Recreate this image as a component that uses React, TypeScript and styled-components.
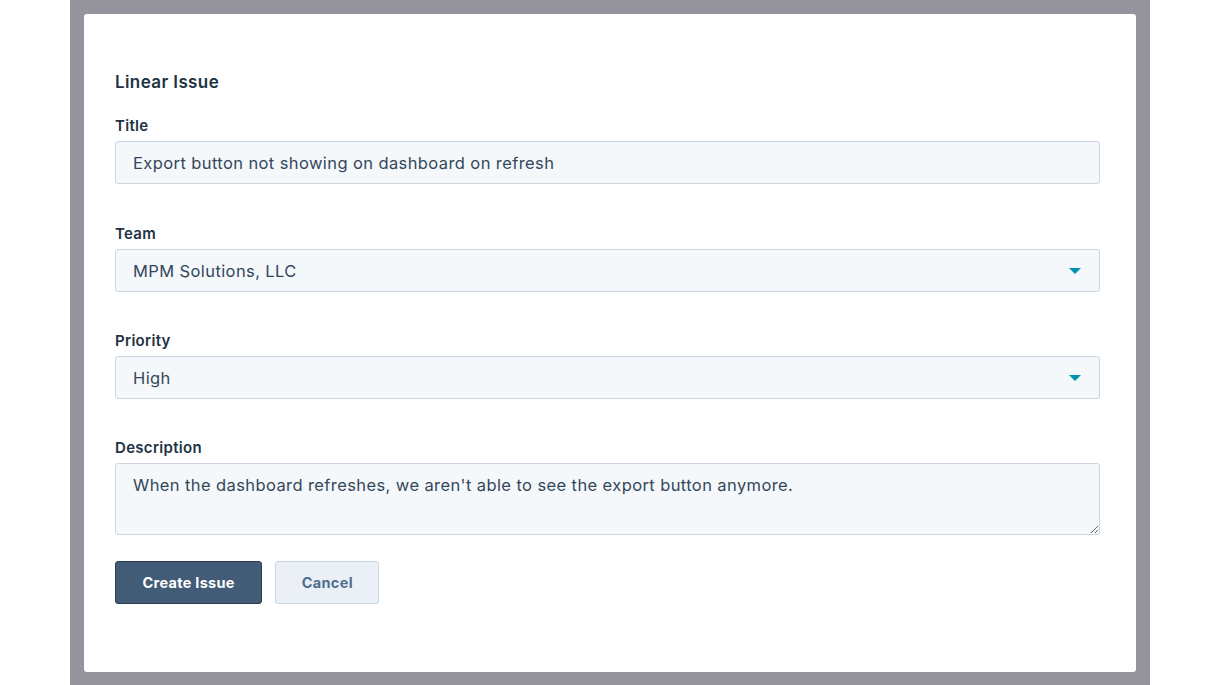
import React from "react";
import styled, { createGlobalStyle } from "styled-components";

const GlobalStyle = createGlobalStyle`
  html, body { margin: 0; padding: 0; background: #ffffff; }
  body { font-family: "Inter", "Noto Sans", "Liberation Sans", sans-serif; }
  * { box-sizing: border-box; }
`;

const Page = styled.div`
  width: 1218px;
  height: 685px;
  display: flex;
  padding-left: 70px;
  background: #ffffff;
`;

const Backdrop = styled.div`
  width: 1080px;
  height: 685px;
  background: #95949c;
  padding: 14px 14px 13px 14px;
`;

const Card = styled.div`
  height: 100%;
  background: #ffffff;
  border-radius: 3px;
  padding: 56px 36px 0 31px;
  display: flex;
  flex-direction: column;
`;

const Heading = styled.h2`
  margin: 0 0 22px 0;
  font-size: 17px;
  line-height: 24px;
  font-weight: 600;
  letter-spacing: 0.4px;
  color: #213343;
`;

const Field = styled.div<{ $gap: number }>`
  display: flex;
  flex-direction: column;
  margin-bottom: ${(p) => p.$gap}px;
`;

const Label = styled.label`
  font-size: 15px;
  line-height: 20px;
  font-weight: 600;
  letter-spacing: 0.3px;
  color: #213343;
  margin-bottom: 5px;
`;

const boxBase = `
  width: 100%;
  background: #f5f8fa;
  border: 1px solid #cbd6e2;
  border-radius: 3px;
  color: #33475b;
  font-family: "Inter", "Noto Sans", "Liberation Sans", sans-serif;
  font-size: 16.5px;
  letter-spacing: 0.4px;
`;

const TextInput = styled.div`
  ${boxBase}
  height: 43px;
  display: flex;
  align-items: center;
  padding: 0 17px;
`;

const SelectBox = styled.div`
  ${boxBase}
  height: 43px;
  display: flex;
  align-items: center;
  justify-content: space-between;
  padding: 0 18px 0 17px;
`;

const Caret = styled.span`
  width: 0;
  height: 0;
  border-left: 6px solid transparent;
  border-right: 6px solid transparent;
  border-top: 6px solid #0091ae;
`;

const TextArea = styled.textarea`
  ${boxBase}
  display: block;
  height: 72px;
  padding: 10px 17px;
  line-height: 22px;
  resize: vertical;
  outline: none;
`;

const Actions = styled.div`
  display: flex;
  gap: 13px;
`;

const Button = styled.button<{ $primary?: boolean }>`
  height: 43px;
  border-radius: 3px;
  font-family: "Inter", "Noto Sans", "Liberation Sans", sans-serif;
  font-size: 14.5px;
  font-weight: 700;
  letter-spacing: 0.3px;
  cursor: pointer;
  padding: 0 ${(p) => (p.$primary ? "26.5px" : "25.5px")};
  background: ${(p) => (p.$primary ? "#425b76" : "#eaf0f6")};
  border: 1px solid ${(p) => (p.$primary ? "#2d3e50" : "#cbd6e2")};
  color: ${(p) => (p.$primary ? "#ffffff" : "#506e91")};
`;

export default function App() {
  return (
    <>
      <GlobalStyle />
      <Page>
        <Backdrop>
          <Card>
            <Heading>Linear Issue</Heading>
            <Field $gap={40}>
              <Label>Title</Label>
              <TextInput>Export button not showing on dashboard on refresh</TextInput>
            </Field>
            <Field $gap={39}>
              <Label>Team</Label>
              <SelectBox>
                <span>MPM Solutions, LLC</span>
                <Caret />
              </SelectBox>
            </Field>
            <Field $gap={39}>
              <Label>Priority</Label>
              <SelectBox>
                <span>High</span>
                <Caret />
              </SelectBox>
            </Field>
            <Field $gap={26}>
              <Label>Description</Label>
              <TextArea
                readOnly
                defaultValue="When the dashboard refreshes, we aren't able to see the export button anymore."
              />
            </Field>
            <Actions>
              <Button $primary>Create Issue</Button>
              <Button>Cancel</Button>
            </Actions>
          </Card>
        </Backdrop>
      </Page>
    </>
  );
}
